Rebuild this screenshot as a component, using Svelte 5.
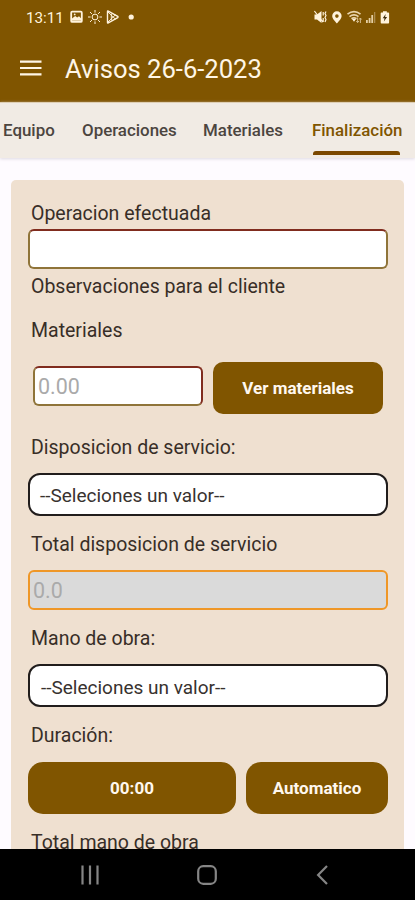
<script lang="ts">
	type Tab = { id: string; label: string };

	const tabs: Tab[] = [
		{ id: "equipo", label: "Equipo" },
		{ id: "operaciones", label: "Operaciones" },
		{ id: "materiales", label: "Materiales" },
		{ id: "finalizacion", label: "Finalización" }
	];

	let active = "finalizacion";
	let operacion = "";
</script>

<div class="screen">
	<div class="status">
		<span class="clock">13:11</span>
		<svg class="status-left" width="70" height="16" viewBox="0 0 70 16" fill="none" stroke="#fff3dc">
			<!-- picture -->
			<rect x="1.2" y="2.7" width="10.6" height="10.2" rx="1" stroke-width="1.8" />
			<path d="M2 11.8V9.5L5.2 7l2 1.6L9 7.2l2.2 2.3v2.3z" fill="#fff3dc" stroke="none" />
			<circle cx="4.7" cy="5.4" r="0.9" fill="#fff3dc" stroke="none" />
			<!-- sun -->
			<circle cx="25" cy="8" r="2.9" stroke-width="1" />
			<path d="M25 1v2.6M25 12.4V15M18 8h2.6M29.4 8H32M20 3l1.9 1.9M28.1 11.1 30 13M20 13l1.9-1.9M28.1 4.9 30 3" stroke-width="1" />
			<!-- play store -->
			<path d="M37.5 2.5v11q0 .8.8.4l9.4-5.3q.7-.6 0-1.2l-9.4-5.3q-.8-.4-.8.4z" stroke-width="1.4" />
			<path d="m38 3 7.5 7.2M38 13l7.5-7.2M41.3 5v6" stroke-width="1" />
			<circle cx="61.2" cy="8" r="2.6" fill="#fff3dc" stroke="none" />
		</svg>
		<svg class="status-right" width="78" height="16" viewBox="0 0 78 16" fill="#fff3dc">
			<!-- vibrate / mute -->
			<path d="M1.5 5.5H4L8.5 2v12L4 10.5H1.5z" />
			<path d="m1.4 2 8.6 11.2M10.2 3v3.5M10.2 9v4M13 2.5l-1 2 1 2-1 2 1 2-1 2.5" fill="none" stroke="#fff3dc" stroke-width="1.2" />
			<!-- location -->
			<path fill-rule="evenodd" d="M23.9 2.3a4.7 4.7 0 0 0-4.7 4.7c0 3.1 4.7 7.4 4.7 7.4s4.7-4.3 4.7-7.4a4.7 4.7 0 0 0-4.7-4.7zm0 3a1.8 1.8 0 1 1 0 3.6 1.8 1.8 0 0 1 0-3.6z" />
			<!-- wifi -->
			<path d="M34.5 5.2q6.5-5 13 0M36.5 7.6q4.5-3.3 9 0M38.5 9.7q2.5-1.8 5 0" fill="none" stroke="#e9d5ad" stroke-width="1.7" />
			<path d="m39 10 2 2.7 2-2.7z" />
			<path d="M44.6 8.5v5M43.3 12l1.3 1.6 1.3-1.6M47.4 14V9M46.2 10.5 47.4 9l1.2 1.5" fill="none" stroke="#d4bb8b" stroke-width="1" />
			<!-- signal -->
			<path d="M53 11h1.8v3H53zM55.7 9h1.8v5h-1.8zM58.3 6h1.8v8h-1.8z" fill="#e5cfa3" />
			<path d="M61 3h1.3v11H61z" fill="#a98a4d" />
			<!-- battery -->
			<path d="M70 2.2h3.8v1.2h1.5q.8 0 .8.9v9.2q0 .9-.8.9h-6.8q-.8 0-.8-.9V4.3q0-.9.8-.9H70z" />
			<path d="m72.7 5-3 4.2h1.8l-.6 3.4 3.2-4.5h-2z" fill="#3f2c0b" />
		</svg>
	</div>

	<header class="appbar">
		<button class="menu" aria-label="Menu">
			<svg width="22" height="16" viewBox="0 0 22 16" stroke="#fff6e6" stroke-width="2.2">
				<path d="M0 1.7h21.5M0 8h21.5M0 14.3h21.5" />
			</svg>
		</button>
		<h1>Avisos 26-6-2023</h1>
	</header>

	<nav class="tabs">
		{#each tabs as tab}
			<button class="tab {tab.id} {active === tab.id ? 'active' : ''}" on:click={() => (active = tab.id)}>
				<span>{tab.label}</span>
			</button>
		{/each}
	</nav>

	<main class="content">
		<section class="card">
			<label class="label" for="operacion">Operacion efectuada</label>
			<input class="field operation" id="operacion" bind:value={operacion} />
			<div class="label notes">Observaciones para el cliente</div>

			<div class="label materials">Materiales</div>
			<div class="row materials-row">
				<div class="field amount">0.00</div>
				<button class="btn view">Ver materiales</button>
			</div>

			<div class="label service">Disposicion de servicio:</div>
			<div class="select">--Seleciones un valor--</div>

			<div class="label service-total">Total disposicion de servicio</div>
			<div class="field disabled">0.0</div>

			<div class="label labour">Mano de obra:</div>
			<div class="select second">--Seleciones un valor--</div>

			<div class="label duration">Duración:</div>
			<div class="row">
				<button class="btn time">00:00</button>
				<button class="btn auto">Automatico</button>
			</div>

			<div class="label labour-total">Total mano de obra</div>
		</section>
	</main>

	<footer class="navbar">
		<svg width="20" height="20" viewBox="0 0 20 20" stroke="#858585" stroke-width="2.2">
			<path d="M2.5 .5v19M10 .5v19M17.5 .5v19" />
		</svg>
		<svg width="20" height="20" viewBox="0 0 20 20" fill="none" stroke="#858585" stroke-width="2.2">
			<rect x="1.2" y="1.2" width="17.6" height="17.6" rx="5" />
		</svg>
		<svg width="12" height="20" viewBox="0 0 12 20" fill="none" stroke="#858585" stroke-width="2.2">
			<path d="M11 1 2.1 10l8.9 9" />
		</svg>
	</footer>
</div>

<style>
	:global(body) {
		margin: 0;
		background: #fdfaff;
	}

	.screen {
		display: flex;
		flex-direction: column;
		width: 415px;
		height: 900px;
		overflow: hidden;
		font-family: Roboto, sans-serif;
		color: #382e27;
		background: #fefbff;
	}

	button {
		margin: 0;
		padding: 0;
		border: 0;
		font-family: inherit;
		background: none;
	}

	/* Top bars */
	.status {
		display: flex;
		align-items: center;
		flex: none;
		box-sizing: border-box;
		height: 34px;
		padding: 0 24px 0 26px;
		color: #fff3dc;
		background: #805500;
	}

	.clock {
		width: 44px;
		font-size: 15.2px;
		line-height: 20px;
		padding-top: 1px;
	}

	.status-right {
		margin-left: auto;
	}

	.appbar {
		display: flex;
		align-items: center;
		flex: none;
		height: 68px;
		padding-left: 20px;
		background: #805500;
	}

	.menu {
		width: 45px;
		height: 22px;
		text-align: left;
	}

	.menu svg {
		display: block;
		margin-top: -1px;
	}

	h1 {
		margin: 2px 0 0;
		font-size: 25.6px;
		font-weight: 400;
		line-height: 34px;
		color: #fff6e6;
		white-space: nowrap;
	}

	.tabs {
		display: flex;
		flex: none;
		height: 56px;
		padding-left: 3px;
		border-top: 1px solid #dfcfb5;
		box-sizing: border-box;
		background: #f1ebe4;
		box-shadow: 0 1px 3px #ded9e2;
	}

	.tab {
		display: flex;
		flex-direction: column;
		align-items: flex-start;
		height: 52px;
		font-size: 16.9px;
		font-weight: 500;
		line-height: 54px;
		color: #4c453f;
		white-space: nowrap;
	}

	.equipo {
		width: 79px;
	}

	.operaciones {
		width: 121px;
	}

	.materiales {
		width: 109px;
	}

	.active {
		color: #805500;
	}

	.active::after {
		content: "";
		flex: none;
		width: 87px;
		height: 3.5px;
		margin: -6px 0 0 1px;
		border-radius: 3px 3px 0 0;
		background: #7b4800;
	}

	/* Form */
	.content {
		flex: 1;
		min-height: 0;
		padding: 22px 11px 0;
		overflow: hidden;
	}

	.card {
		display: flex;
		flex-direction: column;
		box-sizing: border-box;
		width: 393px;
		height: 720px;
		padding: 21px 16px 0 17px;
		border-radius: 5px;
		background: #efe0d0;
	}

	.label {
		flex: none;
		height: 24px;
		margin-left: 3px;
		font-size: 19.5px;
		line-height: 26px;
		white-space: nowrap;
	}

	.field {
		box-sizing: border-box;
		flex: none;
		height: 40px;
		padding: 0 4px;
		border: 2px solid #8f7439;
		border-top-color: #802c1e;
		border-radius: 6px;
		font-size: 21.5px;
		line-height: 38px;
		color: #aaa;
		background: #fff;
	}

	.operation {
		margin-top: 4px;
		width: 360px;
	}

	.notes {
		margin-top: 5px;
	}

	.materials {
		margin-top: 20px;
	}

	.row {
		display: flex;
		flex: none;
		gap: 10px;
	}

	.materials-row {
		align-items: center;
		height: 52px;
		margin: 20px 0 0 5px;
	}

	.amount {
		width: 170px;
		margin-bottom: 4px;
		padding-left: 3px;
		border-right-color: #802c1e;
	}

	.btn {
		height: 52px;
		border-radius: 15px;
		font-size: 17px;
		font-weight: 700;
		color: #fff8ef;
		background: #805500;
	}

	.view {
		width: 170px;
		border-radius: 10px;
	}

	.service {
		margin-top: 21px;
	}

	.select {
		box-sizing: border-box;
		flex: none;
		width: 360px;
		height: 43px;
		margin-top: 14px;
		padding-left: 10px;
		border: 2px solid #211d1c;
		border-radius: 12px;
		font-size: 19px;
		line-height: 42px;
		color: #38322f;
		background: #fff;
	}

	.service-total {
		margin-top: 16px;
	}

	.disabled {
		width: 360px;
		margin-top: 14px;
		border-color: #ef9727;
		padding-left: 3px;
		background: #dadada;
	}

	.labour {
		margin-top: 16px;
	}

	.second {
		padding-left: 11px;
		line-height: 43px;
	}

	.duration {
		margin: 16px 0 15px 3px;
	}

	.time {
		width: 208px;
	}

	.auto {
		width: 142px;
	}

	.labour-total {
		margin-top: 16px;
	}

	/* System navigation */
	.navbar {
		display: flex;
		align-items: center;
		justify-content: space-between;
		flex: none;
		box-sizing: border-box;
		height: 51px;
		padding: 0 87px 0 80px;
		background: #000;
	}

	.navbar svg:nth-child(2) {
		margin-right: 2px;
	}
</style>
